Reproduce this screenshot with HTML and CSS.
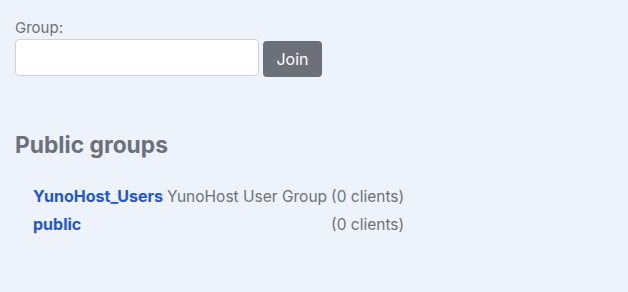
FILE: index.html
```html
<!DOCTYPE html>
<html lang="en">
<head>
    <meta charset="UTF-8">
    <meta name="viewport" content="width=device-width, initial-scale=1.0">
    <title>Galène</title>
    <link rel="stylesheet" href="styles.css">
</head>
<body>

    <div class="home">
        <!-- join form -->
        <form id="groupform" class="groupform">
            <label for="group" class="group-label">Group:</label>
            <div class="group-row">
                <input type="text" id="group" class="group-input">
                <button type="submit" class="btn-join">Join</button>
            </div>
        </form>

        <div id="public-groups" class="public-groups">
            <h2>Public groups</h2>
            <table id="public-groups-table" class="public-groups-table">
                <tr>
                    <td><a href="#">YunoHost_Users</a></td>
                    <td>YunoHost User Group</td>
                    <td>(0 clients)</td>
                </tr>
                <tr>
                    <td><a href="#">public</a></td>
                    <td></td>
                    <td>(0 clients)</td>
                </tr>
            </table>
        </div>
    </div>

</body>
</html>
```

FILE: styles.css
```css
* {
    margin: 0;
    padding: 0;
    box-sizing: border-box;
}

body {
    font-family: 'Inter', 'Liberation Sans', sans-serif;
    background: #eef2fa;
    color: #6b717c;
    font-size: 15.5px;
    height: 100vh;
}

.home {
    padding: 17px 15px;
}

.group-label {
    display: block;
    font-size: 15px;
    line-height: 22px;
}

.group-row {
    display: flex;
    align-items: flex-start;
    gap: 4px;
}

.group-input {
    width: 244px;
    height: 37px;
    border: 1px solid #cfd3dc;
    border-radius: 4px;
    background: #fff;
    padding: 6px 10px;
    font-size: 16px;
}

.group-input:focus {
    outline: none;
    border-color: #86b7fe;
}

.btn-join {
    margin-top: 2px;
    width: 59px;
    height: 36px;
    background: #6c7079;
    border: none;
    border-radius: 4px;
    color: #fff;
    font-family: inherit;
    font-size: 16px;
    cursor: pointer;
}

.btn-join:hover {
    background: #5a5e66;
}

.public-groups {
    margin-top: 54px;
}

.public-groups h2 {
    font-size: 22.8px;
    font-weight: 700;
    line-height: 28px;
    margin-bottom: 23px;
}

.public-groups-table {
    margin-left: 15px;
    border-spacing: 2px;
    line-height: 24px;
}

.public-groups-table td {
    padding: 1px;
}

.public-groups-table a {
    color: #1f56d8;
    font-size: 16px;
    font-weight: 700;
    line-height: 20px;
    text-decoration: none;
}

.public-groups-table a:hover {
    text-decoration: underline;
}
```
